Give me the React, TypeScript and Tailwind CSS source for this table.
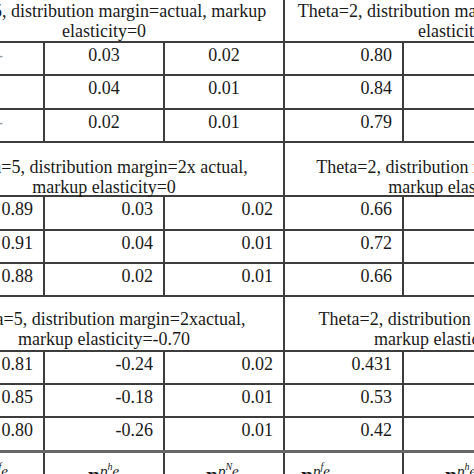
import React from "react";

type Section = {
  left: string[];
  right: string[];
  headPad: string;
  headH: string;
  rowH: string[];
  rows: string[][];
  centered?: boolean;
};

const SECTIONS: Section[] = [
  {
    left: ["Theta=5, distribution margin=actual, markup", "elasticity=0"],
    right: ["Theta=2, distribution margin=actual, markup", "elasticity=0"],
    headPad: "pt-[12px]",
    headH: "h-[54px]",
    rowH: ["h-[33px]", "h-[34px]", "h-[33px]"],
    rows: [
      ["-", "0.03", "0.02", "0.80", "", ""],
      ["", "0.04", "0.01", "0.84", "", ""],
      ["-", "0.02", "0.01", "0.79", "", ""],
    ],
    centered: true,
  },
  {
    left: ["Theta=5, distribution margin=2x actual,", "markup elasticity=0"],
    right: ["Theta=2, distribution margin=2x actual,", "markup elasticity=0"],
    headPad: "pt-[14px]",
    headH: "h-[54px]",
    rowH: ["h-[34px]", "h-[33px]", "h-[33px]"],
    rows: [
      ["0.89", "0.03", "0.02", "0.66", "", ""],
      ["0.91", "0.04", "0.01", "0.72", "", ""],
      ["0.88", "0.02", "0.01", "0.66", "", ""],
    ],
  },
  {
    left: ["Theta=5, distribution margin=2xactual,", "markup elasticity=-0.70"],
    right: ["Theta=2, distribution margin=2xactual,", "markup elasticity=-0.70"],
    headPad: "pt-[12px]",
    headH: "h-[55px]",
    rowH: ["h-[33px]", "h-[33px]", "h-[35px]"],
    rows: [
      ["0.81", "-0.24", "0.02", "0.431", "", ""],
      ["0.85", "-0.18", "0.01", "0.53", "", ""],
      ["0.80", "-0.26", "0.01", "0.42", "", ""],
    ],
  },
];

const COL_W = ["w-[120px]", "w-[120px]", "w-[120px]", "w-[119px]", "w-[119px]", "w-[120px]"];

// eta with stacked superscript, e.g. η^{p^h e}
const Eta = ({ sup }: { sup: string }) => (
  <span className="whitespace-nowrap">
    <span className="relative top-[4px] text-[21px] font-bold">η</span>
    <span className="relative top-[-2px] text-[15px] italic">
      p<span className="relative top-[-6px] text-[10px]">{sup}</span>e
    </span>
  </span>
);

export default function App() {
  return (
    <div
      className="w-[474px] h-[474px] overflow-hidden bg-white text-[#1a1a1a]"
      style={{ fontFamily: '"Liberation Serif", "Times New Roman", serif' }}
    >
      <div className="ml-[-75px] mt-[-11px] w-[760px] text-[18px] leading-[20px]">
        {SECTIONS.map((s, si) => (
          <div key={si}>
            <div className={`flex border-b-2 border-[#3d3d3d] ${s.headH}`}>
              <div className={`w-[360px] border-r-2 border-[#3d3d3d] text-center ${s.headPad}`}>
                {s.left[0]}
                <br />
                {s.left[1]}
              </div>
              <div className={`w-[350px] text-center ${s.headPad}`}>
                {s.right[0]}
                <br />
                {s.right[1]}
              </div>
            </div>
            {s.rows.map((r, ri) => {
              const lastRow = si === SECTIONS.length - 1 && ri === 2;
              return (
                <div
                  key={ri}
                  className={`flex ${s.rowH[ri]} ${
                    lastRow ? "border-b-[3px] border-[#666666]" : "border-b-2 border-[#3d3d3d]"
                  }`}
                >
                  {r.map((v, ci) => {
                    let align = "text-right pr-[10px]";
                    if (ci === 0 && s.centered) align = "text-right pr-[40px] text-[#9a9a9a]";
                    else if (s.centered && (ci === 1 || ci === 2)) align = "text-center";
                    return (
                      <div key={ci} className={`${COL_W[ci]} shrink-0 border-r-2 border-[#3d3d3d] pt-[2px] ${align}`}>
                        {v}
                      </div>
                    );
                  })}
                </div>
              );
            })}
          </div>
        ))}
        <div className="flex h-[60px] leading-[20px]">
          <div className="w-[120px] shrink-0 border-r-2 border-[#3d3d3d] pt-[8px] text-right pr-[35px]">
            <Eta sup="f" />
          </div>
          <div className="w-[120px] shrink-0 border-r-2 border-[#3d3d3d] pt-[8px] pl-[43px]">
            <Eta sup="h" />
          </div>
          <div className="w-[120px] shrink-0 border-r-2 border-[#3d3d3d] pt-[8px] pl-[41px]">
            <Eta sup="N" />
          </div>
          <div className="w-[119px] shrink-0 border-r-2 border-[#3d3d3d] pt-[8px] pl-[16px]">
            <Eta sup="f" />
          </div>
          <div className="w-[119px] shrink-0 border-r-2 border-[#3d3d3d] pt-[8px] pl-[41px]">
            <Eta sup="h" />
          </div>
        </div>
      </div>
    </div>
  );
}
